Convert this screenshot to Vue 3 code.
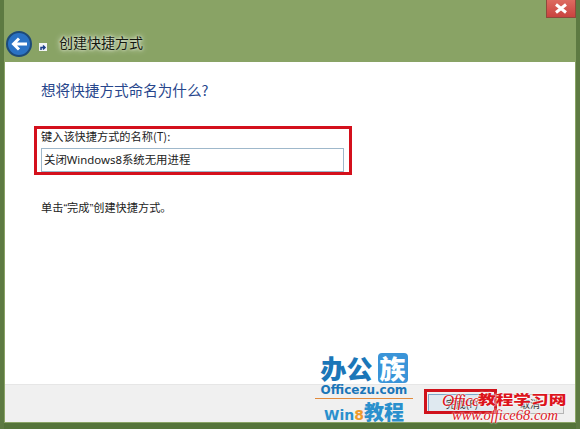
<script setup>
const title = '创建快捷方式'
</script>

<template>
  <div class="window">
    <div class="topline">
      <div class="close">
        <svg width="14" height="11" viewBox="0 0 14 11">
          <path d="M2 1.500l10 8M12 1.500l-10 8" fill="none" stroke="#fff" stroke-width="3" />
        </svg>
      </div>
    </div>
    <div class="titlebar">
      <div class="back">
        <svg width="26" height="26" viewBox="0 0 26 26">
          <circle cx="13" cy="13" r="12" fill="#2a72c4" stroke="#1d4a78" stroke-width="2" />
          <path d="M21 13H8M13 7.500L7.500 13l5.500 5.500" fill="none" stroke="#fff" stroke-width="3" />
        </svg>
      </div>
      <svg class="smallicon" width="8" height="8" viewBox="0 0 8 8">
        <rect width="8" height="8" fill="#f2f4f6" />
        <path d="M2 7V4.500h3M4 2.500l2 2-2 2" fill="none" stroke="#1c3f8a" stroke-width="1.500" />
      </svg>
      <span class="title">{{ title }}</span>
    </div>
    <div class="content">
      <h1 class="heading">想将快捷方式命名为什么?</h1>
      <div class="field">
        <label class="label">键入该快捷方式的名称(T):</label>
        <div class="input">关闭Windows8系统无用进程</div>
      </div>
      <p class="hint">单击“完成”创建快捷方式。</p>
    </div>
    <div class="footer">
      <div class="button primary">完成(F)</div>
      <div class="button">取消</div>
    </div>
    <div class="fieldbox"></div>
    <div class="logo">
      <div class="logo-top">
        <span class="ban">办公</span><span class="zu">族</span>
      </div>
      <div class="logo-url">Officezu.com</div>
      <div class="logo-line"></div>
      <div class="logo-win">Win<b>8</b><em>教程</em></div>
    </div>
    <div class="redbox"></div>
    <div class="mark">
      <div class="mark-1"><i>Office</i><span>教程学习网</span></div>
      <div class="mark-2">www.office68.com</div>
    </div>
  </div>
</template>

<style>
html, body { margin: 0; padding: 0; background: #6f8a50; }
</style>

<style scoped>
.window {
  position: relative;
  width: 580px;
  height: 429px;
  box-sizing: border-box;
  padding: 0 5px 7px 5px;
  display: flex;
  flex-direction: column;
  overflow: hidden;
  background: #89a365;
  font-family: "Noto Sans CJK SC", "Liberation Sans", sans-serif;
  box-shadow: inset 4px 0 0 #5d7a42, inset -4px 0 0 #5d7a42, inset 0 -6px 0 #55743a, inset 1px 0 0 #7f9a68, inset -1px 0 0 #7f9a68;
}
.topline {
  height: 31px;
  display: flex;
  justify-content: flex-end;
  flex: none;
}
.close {
  width: 30px;
  height: 18px;
  margin-right: -1px;
  background: linear-gradient(#dd6a60, #c9433f);
  border: 1px solid #8d4a3c;
  border-top: 0;
  box-sizing: border-box;
  display: flex;
  align-items: center;
  justify-content: center;
}
.titlebar {
  height: 31px;
  flex: none;
  display: flex;
  align-items: center;
}
.back {
  width: 26px;
  height: 26px;
  margin: 0 7px 6px 1px;
}
.smallicon {
  margin-right: 12px;
}
.title {
  font-size: 14px;
  color: #14180f;
  text-shadow: 0 0 6px #f4f7ee, 0 0 3px #f4f7ee;
  margin-bottom: 9px;
}
.content {
  flex: 1;
  background: #fff;
  padding: 17px 0 0 36px;
  box-sizing: border-box;
}
.heading {
  margin: 0;
  font-size: 14.600px;
  font-weight: 400;
  line-height: 22px;
  color: #27468c;
}
.field {
  margin-top: 27px;
  width: 303px;
  display: flex;
  flex-direction: column;
}
.label {
  font-size: 11.200px;
  line-height: 16px;
  color: #222;
  height: 20px;
}
.input {
  height: 24px;
  box-sizing: border-box;
  border: 1px solid #9fb8cb;
  padding-left: 2px;
  font-family: "Noto Sans", "Noto Sans CJK SC", sans-serif;
  font-size: 11.400px;
  line-height: 22px;
  color: #222;
  white-space: nowrap;
}
.hint {
  margin: 28px 0 0;
  font-family: "Liberation Sans", "Noto Sans CJK SC", sans-serif;
  font-size: 11.200px;
  line-height: 16px;
  color: #222;
}
.footer {
  height: 38px;
  flex: none;
  background: #f0f0f0;
  border-top: 1px solid #e6e6e6;
  box-sizing: border-box;
  display: flex;
  justify-content: flex-end;
  align-items: center;
  gap: 0;
  padding-right: 11px;
}
.button {
  width: 68px;
  height: 20px;
  box-sizing: border-box;
  border: 1px solid #b5b5b5;
  background: #ececec;
  font-size: 10px;
  line-height: 18px;
  text-align: center;
  color: #333;
}
.button.primary {
  border-color: #7fa6c8;
  background: #dfe9f0;
}
.fieldbox {
  position: absolute;
  left: 34px;
  top: 126px;
  width: 318px;
  height: 49px;
  box-sizing: border-box;
  border: 3px solid #d4101c;
}
.logo {
  position: absolute;
  left: 315px;
  top: 353px;
  width: 98px;
  font-family: "DejaVu Sans", "Noto Sans CJK SC", sans-serif;
  text-align: center;
}
.logo-top {
  display: flex;
  justify-content: center;
  height: 31px;
  font-family: "Noto Sans CJK SC", sans-serif;
  font-weight: 900;
  font-size: 26px;
  line-height: 30px;
  color: #1b76b8;
  white-space: nowrap;
}
.zu {
  height: 30px;
  background: #3a94d8;
  color: #fff;
  border-radius: 4px;
  width: 30px;
  margin-left: 5px;
}
.logo-url {
  font-weight: 700;
  font-size: 12px;
  line-height: 13px;
  color: #1b76b8;
  white-space: nowrap;
}
.logo-line {
  height: 1px;
  background: #e18a3c;
  margin: 1px 0 3px;
}
.logo-win {
  font-weight: 700;
  font-size: 14px;
  line-height: 20px;
  color: #2a90cd;
  white-space: nowrap;
}
.logo-win b { color: #ee9a2c; }
.logo-win em {
  font-style: normal;
  font-family: "Noto Sans CJK SC", sans-serif;
  font-size: 20px;
  font-weight: 900;
}
.redbox {
  position: absolute;
  left: 424px;
  top: 389px;
  width: 73px;
  height: 25px;
  box-sizing: border-box;
  border: 3px solid #d0121b;
}
.mark {
  position: absolute;
  left: 442px;
  top: 392px;
  width: 130px;
  color: #dd141c;
  font-family: "Liberation Serif", "Noto Sans CJK SC", serif;
  white-space: nowrap;
  text-shadow: 0 0 2px #fff, 0 0 2px #fff;
}
.mark-1 {
  display: flex;
  align-items: center;
  height: 18px;
}
.mark-1 i {
  font-size: 17px;
  line-height: 18px;
  letter-spacing: -0.800px;
  width: 36px;
}
.mark-1 span {
  font-family: "Noto Sans CJK SC", sans-serif;
  font-size: 13px;
  font-weight: 900;
  line-height: 18px;
  letter-spacing: 0;
  display: inline-block;
  transform: scaleX(1.360);
  transform-origin: left center;
  margin-top: -4px;
}
.mark-2 {
  font-size: 14.500px;
  line-height: 14px;
  font-style: italic;
  margin-left: 10px;
  margin-top: -2px;
}
</style>
